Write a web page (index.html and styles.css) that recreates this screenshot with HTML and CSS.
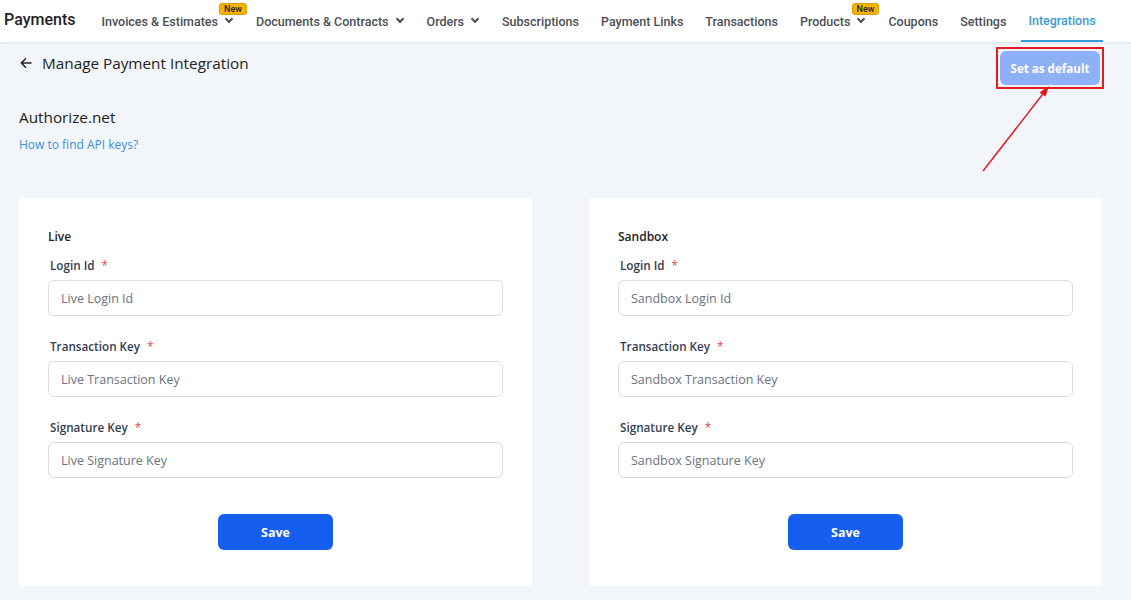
FILE: index.html
```html
<!DOCTYPE html>
<html lang="en">
<head>
  <meta charset="UTF-8">
  <meta name="viewport" content="width=device-width, initial-scale=1.0">
  <title>Payments - Integrations</title>
  <link rel="stylesheet" href="styles.css">
</head>
<body>
  <div class="topbar">
    <div class="brand">Payments</div>
    <ul class="nav">
      <li class="has-badge">Invoices &amp; Estimates <span class="chev"></span><span class="badge">New</span></li>
      <li>Documents &amp; Contracts <span class="chev"></span></li>
      <li>Orders <span class="chev"></span></li>
      <li>Subscriptions</li>
      <li>Payment Links</li>
      <li>Transactions</li>
      <li class="has-badge">Products <span class="chev"></span><span class="badge">New</span></li>
      <li>Coupons</li>
      <li>Settings</li>
      <li class="active">Integrations</li>
    </ul>
  </div>

  <div class="main">
    <div class="title-row">
      <div class="title">
        <svg class="back" width="12" height="12" viewBox="0 0 12 12"><path d="M11 6H1.5M5.5 1.8L1.3 6l4.2 4.2" fill="none" stroke="#222" stroke-width="1.5" stroke-linecap="round" stroke-linejoin="round"/></svg>
        <span>Manage Payment Integration</span>
      </div>
      <span class="mark"><button class="btn-default">Set as default</button></span>
    </div>

    <h2 class="provider">Authorize.net</h2>
    <a class="help" href="javascript:;">How to find API keys?</a>

    <div class="cards">
      <div class="card">
        <div class="card-title">Live</div>
        <label class="field-label">Login Id <i>*</i></label>
        <input class="field" placeholder="Live Login Id">
        <label class="field-label">Transaction Key <i>*</i></label>
        <input class="field" placeholder="Live Transaction Key">
        <label class="field-label">Signature Key <i>*</i></label>
        <input class="field" placeholder="Live Signature Key">
        <button class="btn-save">Save</button>
      </div>
      <div class="card">
        <div class="card-title">Sandbox</div>
        <label class="field-label">Login Id <i>*</i></label>
        <input class="field" placeholder="Sandbox Login Id">
        <label class="field-label">Transaction Key <i>*</i></label>
        <input class="field" placeholder="Sandbox Transaction Key">
        <label class="field-label">Signature Key <i>*</i></label>
        <input class="field" placeholder="Sandbox Signature Key">
        <button class="btn-save">Save</button>
      </div>
    </div>

    <!-- annotation arrow -->
    <svg class="pointer" width="80" height="95" viewBox="0 0 80 95">
      <line x1="3" y1="90" x2="66" y2="9" stroke="#e8141a" stroke-width="1.4"/>
      <path d="M69 5L59.5 11.5L65.5 15.5Z" fill="#e8141a"/>
    </svg>
  </div>
</body>
</html>
```

FILE: styles.css
```css
*{margin:0;padding:0;box-sizing:border-box;}
body{background:#f2f6fa;font-family:"Open Sans","Noto Sans",sans-serif;color:#222;}
ul,li{list-style:none;}

/* 顶部导航 */
.topbar{height:43px;background:#fff;border-bottom:1px solid #e4e7eb;box-shadow:0 1px 2px rgba(0,0,0,.04);display:flex;align-items:center;padding-left:4px;font-family:Roboto,"Liberation Sans",sans-serif;}
.brand{font-size:16px;font-weight:500;color:#1f2328;margin-right:26px;margin-top:-3px;}
.nav{display:flex;height:100%;gap:22px;}
.nav li{position:relative;display:flex;align-items:center;height:100%;font-size:12.5px;font-weight:500;color:#4b4f56;padding-top:1px;white-space:nowrap;}
.nav li .chev{display:inline-block;width:6px;height:6px;border-right:2px solid #4b4f56;border-bottom:2px solid #4b4f56;transform:rotate(45deg);margin:-5px 2px 0 8px;}
.nav li.active{color:#3a9ad9;border-bottom:2px solid #3a9ad9;padding:1px 7px 0;margin-left:-7px;}
.badge{position:absolute;top:3px;right:-13px;background:#f5b400;border:1px solid #d99b00;color:#222;font-size:9px;font-weight:500;line-height:10px;padding:0 4px;border-radius:3px;}

.main{position:relative;padding:8px 29px 20px 19px;}
.title-row{display:flex;justify-content:space-between;align-items:flex-start;}
.title{display:flex;align-items:center;height:24px;font-size:15.3px;}
.title .back{margin:0 10px 0 1px;}
.mark{display:block;border:2px solid #e01e1e;padding:2px;margin:-4px -2px -4px 0;line-height:0;}
.btn-default{width:100px;height:34px;border:none;border-radius:6px;background:#8eb0f6;color:#fff;font-family:inherit;font-size:11.6px;font-weight:700;}
.provider{font-size:15.3px;font-weight:400;line-height:22px;margin-top:21px;}
.help{display:inline-block;margin-top:8px;font-size:12px;line-height:18px;color:#3b8de0;text-decoration:none;}

.cards{display:flex;gap:57px;margin-top:44px;}
.card{width:513px;background:#fff;padding:30px 29px 36px;display:flex;flex-direction:column;}
.card-title{font-size:12px;font-weight:600;line-height:18px;color:#1f2328;}
.field-label{display:block;margin:10px 0 6px 2px;font-size:11.7px;font-weight:600;line-height:18px;color:#344054;}
.field-label i{font-style:normal;color:#e5484d;margin-left:4px;font-weight:400;}
.field{height:36px;border:1px solid #d9dde3;border-radius:6px;padding:0 12px;font-family:inherit;font-size:12.5px;color:#333;}
.field::placeholder{color:#6b7280;}
.field + .field-label{margin-top:21px;}
.btn-save{align-self:center;margin-top:36px;width:115px;height:36px;border:none;border-radius:6px;background:#155eef;color:#fff;font-family:inherit;font-size:12.5px;font-weight:700;}

.pointer{position:absolute;left:980px;top:38px;}
```
